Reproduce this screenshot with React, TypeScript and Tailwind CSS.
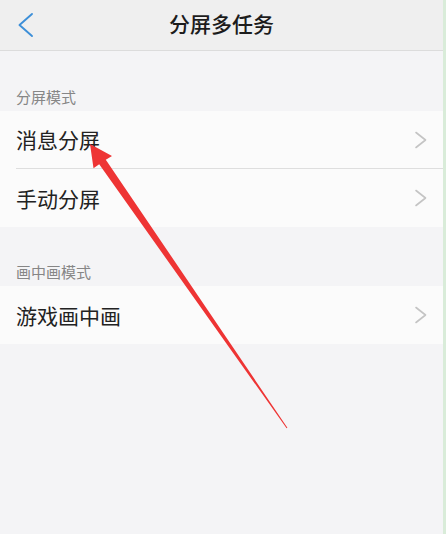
const FONT = { fontFamily: "'Noto Sans CJK SC', 'Noto Sans', sans-serif" };

type Item = { label: string };

const sections: { title: string; items: Item[] }[] = [
  { title: "分屏模式", items: [{ label: "消息分屏" }, { label: "手动分屏" }] },
  { title: "画中画模式", items: [{ label: "游戏画中画" }] },
];

function Row({ label, last }: { label: string; last: boolean }) {
  return (
    <div className="bg-[#fbfbfb] pl-4">
      <div
        className={`h-[58px] flex items-center justify-between pr-[15px] ${last ? "" : "border-b border-[#dedede]"}`}
      >
        <span className="text-[21px] text-[#222222] leading-none">{label}</span>
        <svg width="14" height="18" viewBox="0 0 14 18" fill="none">
          <polyline points="2,1.5 11.5,9 2,16.5" stroke="#c4c4c4" strokeWidth="1.6" strokeLinecap="round" strokeLinejoin="round" />
        </svg>
      </div>
    </div>
  );
}

export default function App() {
  return (
    <div className="relative w-[446px] h-[534px] overflow-hidden bg-[#f4f4f6] border-r-[3px] border-[#d9ecd9]" style={FONT}>
      {/* Header */}
      <header className="h-[51px] bg-[#efefef] border-b border-[#dcdcdc] flex items-center relative">
        <svg className="ml-[17px]" width="18" height="26" viewBox="0 0 18 26" fill="none">
          <polyline points="15,2 2.5,13 15,24" stroke="#3d8fd8" strokeWidth="1.9" strokeLinecap="round" strokeLinejoin="round" />
        </svg>
        <div className="absolute inset-0 flex items-center justify-center">
          <span className="text-[21px] font-medium text-[#1c1c1c] -mt-[2px]">分屏多任务</span>
        </div>
      </header>

      {sections.map((s, si) => (
        <section key={s.title}>
          <div className={`${si === 0 ? "h-[60px]" : "h-[59px]"} flex items-end pl-4 pb-[4px]`}>
            <span className="text-[15px] text-[#868686] leading-[20px]">{s.title}</span>
          </div>
          {s.items.map((it, i) => (
            <Row key={it.label} label={it.label} last={i === s.items.length - 1} />
          ))}
        </section>
      ))}

      {/* annotation arrow */}
      <svg className="absolute left-0 top-0 pointer-events-none" width="446" height="534" viewBox="0 0 446 534">
        <polygon
          points="90,144 112,156 105.8,159.7 287.4,427.7 286.6,428.3 99.2,164.3 93.5,168.3"
          fill="#ee3434"
        />
      </svg>
    </div>
  );
}
